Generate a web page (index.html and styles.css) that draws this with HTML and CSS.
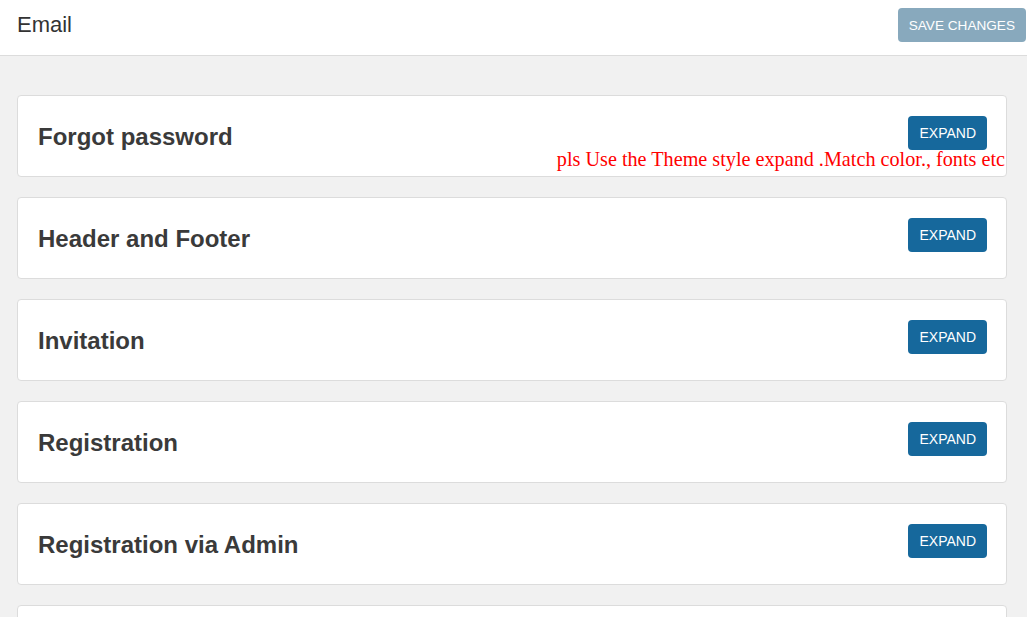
FILE: index.html
```html
<!DOCTYPE html>
<html>
<head>
<meta charset="utf-8">
<link rel="stylesheet" href="styles.css">
</head>
<body>
<header class="topbar">
  <h1 class="page-title">Email</h1>
  <button class="btn-save">SAVE CHANGES</button>
</header>
<main class="content">
  <section class="card">
    <h2 class="card-title">Forgot password</h2>
    <button class="btn-expand">EXPAND</button>
    <span class="note">pls Use the Theme style expand .Match color., fonts etc</span>
  </section>
  <section class="card">
    <h2 class="card-title">Header and Footer</h2>
    <button class="btn-expand">EXPAND</button>
  </section>
  <section class="card">
    <h2 class="card-title">Invitation</h2>
    <button class="btn-expand">EXPAND</button>
  </section>
  <section class="card">
    <h2 class="card-title">Registration</h2>
    <button class="btn-expand">EXPAND</button>
  </section>
  <section class="card">
    <h2 class="card-title">Registration via Admin</h2>
    <button class="btn-expand">EXPAND</button>
  </section>
  <section class="card card-partial"></section>
</main>
</body>
</html>
```
FILE: styles.css
```css
* { box-sizing: border-box; }
html, body {
  margin: 0;
  padding: 0;
  height: 100%;
  overflow: hidden;
}
body {
  background: #f1f1f1;
  font-family: "Liberation Sans", Arial, sans-serif;
  color: #333;
}
.topbar {
  height: 56px;
  background: #fff;
  border-bottom: 1px solid #dcdcdc;
  display: flex;
  align-items: center;
  justify-content: space-between;
  padding: 0 1px 5px 17px;
}
.page-title {
  margin: 0;
  font-size: 22px;
  font-weight: normal;
  color: #333;
  line-height: 1;
}
.btn-save {
  height: 34px;
  padding: 0 11px;
  border: none;
  border-radius: 4px;
  background: #88a9bd;
  color: #fff;
  font-family: "Liberation Sans", Arial, sans-serif;
  font-size: 13.6px;
}
.content {
  padding: 39px 20px 0 17px;
  display: flex;
  flex-direction: column;
  gap: 20px;
}
.card {
  position: relative;
  height: 82px;
  flex: none;
  background: #fff;
  border: 1px solid #dcdcdc;
  border-radius: 4px;
  padding: 20px 19px 20px 20px;
  display: flex;
  justify-content: space-between;
  align-items: flex-start;
}
.card-title {
  margin: 1px 0 0;
  font-size: 24px;
  line-height: 40px;
  font-weight: bold;
  color: #3a3a3a;
}
.btn-expand {
  height: 34px;
  padding: 0 11px;
  border: none;
  border-radius: 4px;
  background: #16689c;
  color: #fff;
  font-family: "Liberation Sans", Arial, sans-serif;
  font-size: 14px;
}
.note {
  position: absolute;
  right: 1px;
  top: 53px;
  font-family: "Liberation Serif", "Times New Roman", serif;
  font-size: 20.2px;
  line-height: 20px;
  color: #ff0000;
  white-space: nowrap;
}
```
